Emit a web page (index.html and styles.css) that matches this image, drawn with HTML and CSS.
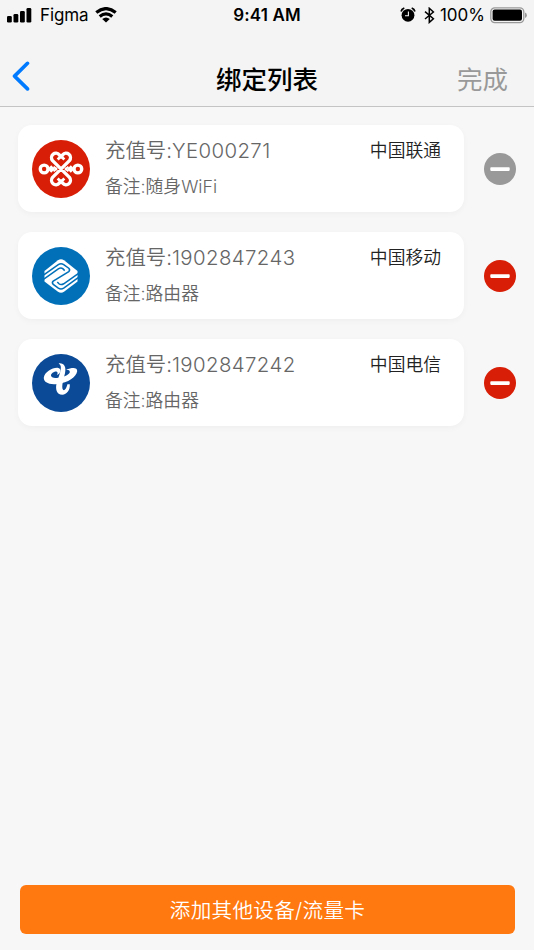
FILE: index.html
```html
<!DOCTYPE html>
<html lang="zh-CN">
<head>
<meta charset="utf-8">
<title>绑定列表</title>
<link rel="stylesheet" href="styles.css">
</head>
<body>
<div class="screen">
  <header class="header">
    <div class="status">
      <div class="status-left">
        <svg class="signal" width="25" height="15" viewBox="0 0 25 15"><rect x="0" y="8" width="4.8" height="6.5" rx="1.3"/><rect x="6.5" y="6" width="4.8" height="8.5" rx="1.3"/><rect x="13" y="3" width="4.8" height="11.5" rx="1.3"/><rect x="19.5" y="0" width="4.8" height="14.5" rx="1.3"/></svg>
        <span class="carrier">Figma</span>
        <svg class="wifi" width="22" height="16" viewBox="0 0 22 16"><g fill="none" stroke="#000" stroke-width="3.2"><path d="M1.3 5.6Q11-2.4 20.7 5.6"/><path d="M4.7 9.5Q11 4.2 17.3 9.5"/></g><path d="M7.2 12Q11 9 14.8 12L11 15.4Z"/></svg>
      </div>
      <span class="time">9:41 AM</span>
      <div class="status-right">
        <svg width="16" height="16" viewBox="0 0 16 16"><circle cx="8" cy="8.3" r="6.4"/><path d="M1.1 4.5Q1.6 2 4.3 1M14.9 4.5Q14.4 2 11.7 1" fill="none" stroke="#000" stroke-width="1.7"/><path d="M8.4 4.4V8.7H5" fill="none" stroke="#f4f4f4" stroke-width="1.1"/></svg>
        <svg class="bluetooth" width="11" height="17" viewBox="0 0 11 17"><path d="M1 4.7L9.4 11.7 5.3 15.4V1.3L9.4 5 1 12" fill="none" stroke="#000" stroke-width="1.5"/></svg>
        <span class="percent">100%</span>
        <svg class="battery" width="37" height="17" viewBox="0 0 37 17"><rect x=".8" y=".8" width="33" height="14.8" rx="4" fill="none" stroke="#999" stroke-width="1.3"/><rect x="2.6" y="2.6" width="29.4" height="11.2" rx="2"/><path d="M35 5.5Q36.9 6.3 36.9 8.2T35 11Z" fill="#999"/></svg>
      </div>
    </div>
    <nav class="nav">
      <svg class="back" width="18" height="30" viewBox="0 0 18 30"><path d="M15.5 2.3L2.5 15.1 15.5 27.9" fill="none" stroke="#007aff" stroke-width="3.6" stroke-linecap="round" stroke-linejoin="round"/></svg>
      <h1 class="title">绑定列表</h1>
      <span class="done">完成</span>
    </nav>
  </header>

  <main class="list">
    <div class="row">
      <article class="card">
        <svg class="logo" viewBox="20 18 172 172"><circle cx="106" cy="104" r="86" fill="#d81e06"/><g fill="none" stroke="#fff" stroke-width="10" stroke-linejoin="round"><path d="M106 68L101 62A13 13 0 0 0 81 79L131 129A13 13 0 0 1 111 146L106 140L101 146A13 13 0 0 1 81 129L131 79A13 13 0 0 0 111 62Z"/><circle cx="56" cy="104" r="11.5"/><circle cx="156" cy="104" r="11.5"/><path d="M106 66L96 76M106 66L116 76M106 142L96 132M106 142L116 132" stroke-width="8"/><path d="M66 104L77 93 88 104 77 115ZM146 104L135 93 124 104 135 115Z" fill="#fff" stroke="none"/><path d="M84 97L94 107M84 111L94 101M128 97L118 107M128 111L118 101" stroke-width="6"/></g></svg>
        <div class="info">
          <div class="number">充值号:<span class="code">YE000271</span></div>
          <div class="note">备注:随身WiFi</div>
        </div>
        <div class="operator">中国联通</div>
      </article>
      <svg class="remove" viewBox="0 0 32 32"><circle cx="16" cy="16" r="16" fill="#999"/><rect x="6.3" y="14.3" width="19.4" height="3.6" rx=".8" fill="#fff"/></svg>
    </div>
    <div class="row">
      <article class="card">
        <svg class="logo" viewBox="20 20 172 172"><circle cx="106" cy="106" r="86" fill="#0170b9"/><path d="M57 91L97 59Q106 53 115 59L155 91V122L115 153Q106 159 97 153L57 122Z" fill="#fff"/><g fill="none" stroke="#0170b9" stroke-width="4.5"><path d="M55 103L98 72Q106 67 114 72L129 83Q134 88 129 93L83 121Q78 126 83 131L98 142Q106 147 114 142L157 111"/><path d="M55 115L98 85Q106 80 112 85L117 90M157 99L114 129Q106 134 100 129L95 124"/></g></svg>
        <div class="info">
          <div class="number">充值号:<span class="code">1902847243</span></div>
          <div class="note">备注:路由器</div>
        </div>
        <div class="operator">中国移动</div>
      </article>
      <svg class="remove" viewBox="0 0 32 32"><circle cx="16" cy="16" r="16" fill="#d81e06"/><rect x="6.3" y="14.3" width="19.4" height="3.6" rx=".8" fill="#fff"/></svg>
    </div>
    <div class="row">
      <article class="card">
        <svg class="logo" viewBox="20 22 172 172"><circle cx="106" cy="108" r="86" fill="#0a4a96"/><g fill="#fff" transform="translate(36 42)"><path d="M85 27C104 19 119 20 118 31C115 48 92 65 59 69C34 72 18 64 19 50C21 34 44 20 60 21C73 23 70 39 58 42C63 34 58 30 51 33C42 37 37 43 43 48C55 56 91 47 96 35C97 29 93 27 85 27Z"/><path d="M63 8C79 6 86 18 82 36C78 54 70 76 76 86C81 91 87 80 89 70L96 70C98 86 87 101 74 101C56 100 53 84 57 66L67 36C71 20 71 13 63 8Z"/></g></svg>
        <div class="info">
          <div class="number">充值号:<span class="code">1902847242</span></div>
          <div class="note">备注:路由器</div>
        </div>
        <div class="operator">中国电信</div>
      </article>
      <svg class="remove" viewBox="0 0 32 32"><circle cx="16" cy="16" r="16" fill="#d81e06"/><rect x="6.3" y="14.3" width="19.4" height="3.6" rx=".8" fill="#fff"/></svg>
    </div>
  </main>
  <button class="add">添加其他设备/流量卡</button>
</div>
</body>
</html>
```
FILE: styles.css
```css
* { box-sizing: border-box; }
body { margin: 0; font-family: Inter, "Noto Sans CJK SC", sans-serif; background: #f7f7f7; }
svg { display: block; flex: none; }
.screen { height: 950px; display: flex; flex-direction: column; }
.header { height: 107px; background: #f4f4f4; border-bottom: 1px solid #c4c4c4; }
.status { height: 30px; padding: 0 7px; display: grid; grid-template-columns: 1fr auto 1fr; align-items: center; font-size: 17px; line-height: 30px; }
.status-left, .status-right { display: flex; align-items: center; }
.status-right { justify-content: flex-end; }
.carrier { margin: 0 6px 0 8px; letter-spacing: -.1px; }
.time { font-weight: 600; font-size: 17px; letter-spacing: .15px; }
.bluetooth { margin: 0 5px 0 8px; }
.percent { margin-right: 5px; }
.nav { height: 76px; padding: 0 26px 0 12px; display: grid; grid-template-columns: 1fr auto 1fr; align-items: center; }
.back { margin-top: 16px; }
.title { margin: 23px 0 0 14px; font-size: 25.5px; line-height: 36px; font-weight: 500; }
.done { margin-top: 23px; justify-self: end; font-size: 25.5px; line-height: 36px; color: #999; }
.list { padding: 18px 18px 0; display: flex; flex-direction: column; gap: 20px; flex: 1; }
.row { display: flex; align-items: center; gap: 20px; }
.card { width: 446px; height: 87px; padding: 0 23px 0 14px; display: flex; align-items: center; background: #fff; border-radius: 14px; box-shadow: 0 2px 6px rgba(0, 0, 0, .035); }
.logo { width: 58px; height: 58px; }
.info { margin-left: 15px; align-self: flex-start; padding-top: 11px; flex: 1; color: #666; }
.number { font-size: 20.4px; line-height: 30px; font-weight: 350; }
.code { letter-spacing: .4px; }
.note { margin-top: 8px; font-size: 17.8px; line-height: 26px; font-weight: 350; }
.operator { align-self: flex-start; margin-top: 13px; font-size: 17.8px; line-height: 26px; font-weight: 350; color: #222; }
.remove { width: 32px; height: 32px; }
.add { height: 49px; margin: 0 19px 16px 20px; padding: 2px 0 0; border: 0; border-radius: 6px; background: #ff7810; color: #fff; font: 350 20.6px/47px Inter, "Noto Sans CJK SC", sans-serif; letter-spacing: .3px; }
```
